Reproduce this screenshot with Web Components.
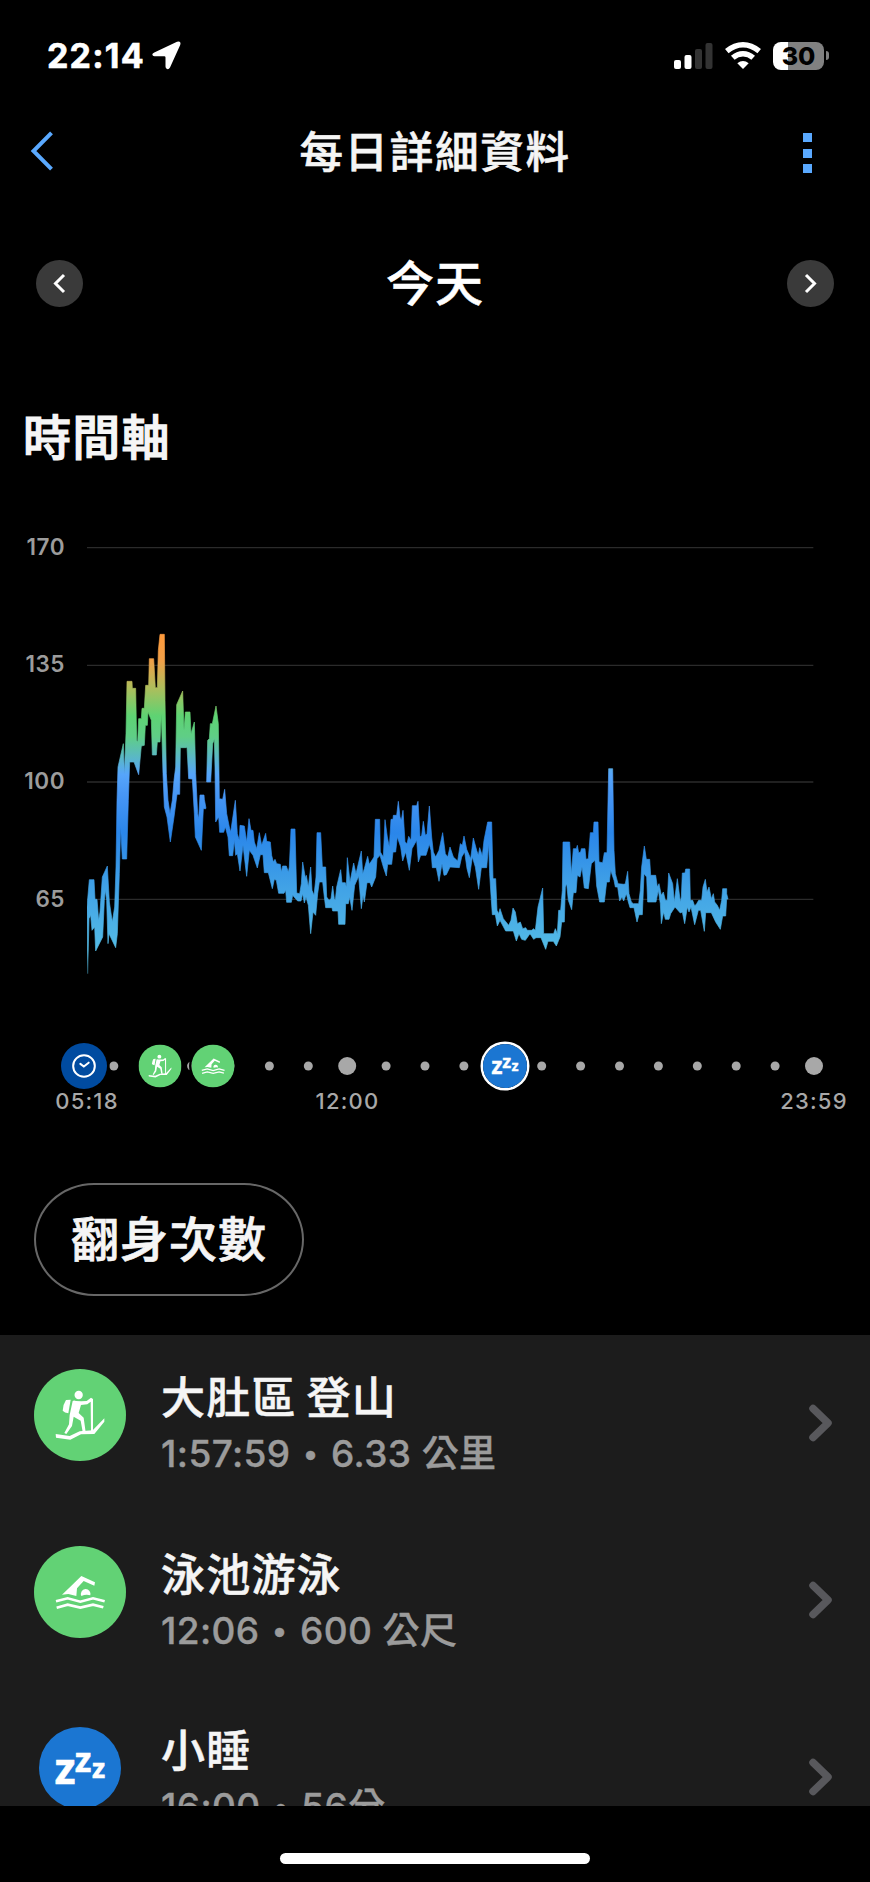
<!DOCTYPE html>
<html lang="zh-Hant">
<head>
<meta charset="utf-8">
<title>每日詳細資料</title>
<style>
  body {
    margin: 0;
    width: 870px;
    height: 1882px;
    overflow: hidden;
    background: #000;
    color: #f5f5f5;
    font-family: Inter, "Noto Sans CJK TC", sans-serif;
  }
</style>
</head>
<body>
<daily-page></daily-page>

<script>
const define = (name, html, setup) => {
  const $template = document.createElement("template");
  $template.innerHTML = html;
  window.customElements.define(name, class extends HTMLElement {
    constructor() {
      super();
      this.attachShadow({ mode: "open" });
      this.shadowRoot.appendChild($template.content.cloneNode(true));
    }
    connectedCallback() {
      if (setup) setup(this, this.shadowRoot);
    }
  });
};

// icons are drawn in a 276 x 276 box, the disc is added by activity-icon
const ICONS = {
  hike: {
    color: "#62d275",
    body: `
      <circle cx="134" cy="78" r="12.5"/>
      <path d="M96 93L110 92L103 133Q92 131 86 125Q87 106 96 93Z"/>
      <path d="M116 96Q120 93 126 96L142 97L158 96L171 86L177 90L177 193H171L170 98L160 106L141 108L134 132L149 146L155 190L146 188L140 155L119 143L114 171L97 195L91 192L105 166L107 138Z"/>
      <path d="M65 195L107 201L137 187L176 184L211 148V158L181 195L141 196L109 212L66 206Z"/>`
  },
  swim: {
    color: "#62d275",
    body: `
      <path d="M84 146L109 122L142 90L183 109L181 119L149 105L129 127L127 150L103 144Z"/>
      <path d="M142 150A14.500 14.500 0 1 1 169 148Q156 144 142 150Z"/>
      <path fill="none" stroke="#fff" stroke-width="8" d="M66 166L101 157L139 167L177 157L212 166M68 185L101 176L139 185L177 176L208 184"/>`
  },
  sleep: {
    color: "#1b76d2",
    body: `
      <g font-family="Noto Sans, sans-serif" font-weight="700" stroke="#fff" stroke-width="2">
        <text x="52" y="191" font-size="144">z</text>
        <text x="120" y="151" font-size="114">z</text>
        <text x="178" y="171" font-size="90">z</text>
      </g>`
  },
  clock: {
    color: "#004ba0",
    body: `
      <g fill="none" stroke="#fff" stroke-width="12" stroke-linecap="round">
        <circle cx="138" cy="138" r="65"/>
        <path d="M116 125L137 141L166 118"/>
      </g>`
  }
};

define("activity-icon", /*html*/ `
  <style>
    :host { display: block; border-radius: 50%; }
    svg { display: block; width: 100%; height: 100%; }
  </style>
  <svg viewBox="0 0 276 276" fill="#fff"></svg>
`, (host, root) => {
  const icon = ICONS[host.getAttribute("name")];
  root.querySelector("svg").innerHTML =
    `<circle cx="138" cy="138" r="138" fill="${icon.color}"/>${icon.body}`;
});

define("status-bar", /*html*/ `
  <style>
    :host {
      display: flex;
      align-items: center;
      box-sizing: border-box;
      height: 100px;
      padding: 11px 41px 0 47px;
      color: #fff;
    }
    .time { font-size: 34px; font-weight: 700; letter-spacing: 1.200px; margin-right: 7px; -webkit-text-stroke: .6px #fff; }
    .right { display: flex; align-items: center; margin-left: auto; }
    .wifi { margin: 0 12px; }
    .battery {
      display: flex;
      align-items: center;
      justify-content: center;
      width: 51px;
      height: 28px;
      border-radius: 8px;
      background: linear-gradient(90deg, #fff 29%, #818181 29%);
      color: #000;
      font-size: 25px;
      font-weight: 800;
    }
    .nub { width: 3px; height: 9px; margin-left: 2px; border-radius: 0 4px 4px 0; background: #818181; }
  </style>
  <span class="time">22:14</span>
  <svg width="29" height="29" viewBox="0 0 29 29"><path fill="#fff" d="M2.300 11.500L25 .8Q29.500-.6 28.200 4L18 26.500Q16.500 29 14.600 27.800Q13.500 27 13.500 25.500V16.500Q13.500 15.300 12.300 15.300H2.500Q.5 15.300 .3 13.500Q.3 12.300 2.300 11.500Z"/></svg>
  <div class="right">
    <svg width="39" height="26" viewBox="0 0 39 26">
      <rect y="17" width="7" height="9" rx="2" fill="#fff"/>
      <rect x="10.500" y="12" width="7" height="14" rx="2" fill="#fff"/>
      <rect x="21" y="6" width="7" height="20" rx="2" fill="#333"/>
      <rect x="31.500" width="7" height="26" rx="2" fill="#333"/>
    </svg>
    <svg class="wifi" width="36" height="27" viewBox="0 0 36 27">
      <g fill="none" stroke="#fff" stroke-width="5.500">
        <path d="M1.800 9.200Q9.500 2.800 18 2.800T34.200 9.200"/>
        <path d="M7.800 15.800Q12.500 11.700 18 11.700T28.200 15.800"/>
      </g>
      <path fill="#fff" d="M12.300 21.200Q18 16.800 23.700 21.200L18 26.900Z"/>
    </svg>
    <div class="battery">30</div>
    <div class="nub"></div>
  </div>
`);

define("nav-bar", /*html*/ `
  <style>
    :host {
      display: grid;
      grid-template-columns: 100px 1fr 100px;
      align-items: center;
      height: 103px;
    }
    h1 { margin: 2px 0 0; text-align: center; font-size: 43.5px; font-weight: 500; letter-spacing: 1.7px; line-height: 1; -webkit-text-stroke: .6px; }
    .back { margin: -2px 0 0 30px; }
    .menu { display: grid; gap: 6.500px; margin: 3px 0 0 33px; }
    .menu i { width: 9px; height: 9px; background: #5aa9ff; }
  </style>
  <svg class="back" width="24" height="40" viewBox="0 0 24 40"><path fill="none" stroke="#5aa9ff" stroke-width="4" d="M21.500 1.800L3.500 20L21.500 38.200"/></svg>
  <h1><slot></slot></h1>
  <div class="menu"><i></i><i></i><i></i></div>
`);

define("date-switcher", /*html*/ `
  <style>
    :host {
      display: flex;
      align-items: center;
      justify-content: space-between;
      height: 160px;
      padding: 0 36px;
      color: #fff;
    }
    h2 { margin: 2px 0 0; font-size: 48px; font-weight: 500; letter-spacing: 1px; line-height: 1; -webkit-text-stroke: .5px; }
    svg { display: block; }
  </style>
  <svg width="47" height="47" viewBox="0 0 47 47"><circle cx="23.500" cy="23.500" r="23.500" fill="#3a3a3a"/><path fill="none" stroke="#fff" stroke-width="3" d="M28 15L19.500 23.500L28 32"/></svg>
  <h2><slot></slot></h2>
  <svg width="47" height="47" viewBox="0 0 47 47"><circle cx="23.500" cy="23.500" r="23.500" fill="#3a3a3a"/><path fill="none" stroke="#fff" stroke-width="3" d="M19 15L27.500 23.500L19 32"/></svg>
`);

define("section-title", /*html*/ `
  <style>
    :host {
      display: flex;
      align-items: center;
      box-sizing: border-box;
      height: 125.600px;
      padding: 25px 0 0 23px;
      font-size: 48px;
      font-weight: 500;
      letter-spacing: 1.200px;
      line-height: 1;
      -webkit-text-stroke: 1.200px;
    }
  </style>
  <slot></slot>
`);

// heart rate bands: upper and lower edge of each part, relative to its own origin
const BANDS = [
  [{
    at: [0, 0],
    high: "51,920 58,838 72,838 75,897 81,897 86,960 90,935 97,830 112,797 118,905 127,965 134,920 138,800 141,600 144,500 160,430 163,520 168,400 171,243 186,243 187,264 197,264 200,420 203,425 206,355 214,355 216,324 223,324 227,255 236,255 238,175 251,175 256,262 262,262 265,150 270,102 283,102 285,300 289,520 294,600 300,640 307,600 312,540 317,500 320,313 338,272 342,390 346,335 360,335 363,400 373,365 377,520 383,640 386,655 390,584 402,584 403,597 408,624",
    low: "53,1120 57,955 62,945 66,990 74,980 77,1052 98,1010 103,900 106,870 110,900 114,1030 117,1000 137,1042 142,1000 148,820 152,680 157,776 170,776 175,600 179,485 192,485 206,523 214,437 223,435 226,375 232,375 234,335 244,360 247,464 259,464 262,425 270,425 274,340 279,520 283,620 291,650 301,725 312,650 321,582 329,582 331,442 348,442 351,440 356,535 367,536 373,640 376,710 394,750 400,625 407,625"
  }],
  [{
    at: [0, 0],
    high: "410,545 413,420 418,415 421,370 427,370 438,317 445,370 448,595 458,597 464,567 470,640 478,680 482,695 496,600 502,700 508,720 510,675 523,677 530,725 537,655 543,690 549,690 553,725 560,745 568,697 575,735 587,699 590,723 601,725 605,765 610,785 615,777 620,790 631,792 634,815 638,797 649,797 655,815 658,800 663,686 675,686 680,878 689,880 694,850 698,785 706,832 709,825 715,860 722,800 726,870 732,885 738,830 741,697 752,697 757,800 767,800 770,890",
    low: "422,545 428,430 433,417 435,500 437,665 446,650 449,696 461,696 466,680 474,710 478,766 488,766 493,720 497,765 502,760 510,812 519,735 530,828 538,750 549,765 562,803 571,763 579,763 583,817 595,817 607,865 613,837 619,840 626,879 642,879 647,870 650,906 664,906 668,885 683,902 693,902 698,880 703,908 708,890 715,915 722,1000 729,935 737,945 743,880 748,845 758,845 763,890 767,922"
  }, {
    at: [750, 420],
    high: "27,480 33,475 38,437 43,475 46,480 50,440 62,388 66,427 76,427 79,440 82,352 90,425 101,368 108,400 124,332 128,400 133,385 143,348 148,372 162,350 166,237 179,237 181,335 190,350 195,238 202,290 208,320 213,237 219,237 220,225 230,225 235,183 240,230 244,240 249,210 255,305 261,310 266,288 273,300 277,196 290,196 294,183 300,290 305,285 310,243 316,285 321,280 328,197 335,290 340,335 347,350 357,330 368,277 376,340 383,350 390,320 400,350 413,362 421,310 427,315 432,287 440,327 452,355 460,293 470,330 475,345 479,322 487,346 492,300 503,245 515,245 519,415 527,415 531,510 536,520 540,505 550,535 558,545 566,555 573,540 579,503 586,515 592,550 601,545 608,565 617,562 622,570 636,570 640,565 646,570 654,500 668,443 671,580 701,580 706,565 712,580 716,510 722,510 727,450",
    low: "17,502 36,502 38,512 54,512 56,552 75,552 77,490 85,490 89,470 96,510 104,435 116,408 124,505 129,465 133,485 141,427 150,427 155,440 167,410 171,355 180,345 190,380 199,407 203,372 215,372 219,335 227,335 232,290 242,320 248,362 257,335 268,390 276,325 290,300 295,365 302,345 318,345 328,312 333,330 337,382 349,382 357,423 366,370 372,405 379,403 390,380 418,382 425,350 434,335 441,385 448,412 457,350 466,380 476,447 484,382 500,382 506,310 509,400 513,465 517,523 526,523 532,557 540,540 557,572 580,572 589,602 597,580 605,597 616,600 630,580 641,597 648,592 663,592 677,627 684,603 700,603 709,617 720,590 725,545"
  }, {
    at: [1440, 420],
    high: "39,305 59,305 64,400 70,325 79,325 82,315 86,337 92,335 94,325 105,325 108,357 115,355 121,277 130,277 132,245 144,245 147,365 158,367 163,337 171,337 176,85 188,85 192,330 196,400 204,430 222,432 226,430 233,393 237,460 244,485 250,490 266,490 271,450 275,380 283,317 289,357 299,357 302,405 317,405 322,440 327,430 334,465 340,455 346,480 352,480 356,398 368,430 373,485 382,415 391,485 394,470 397,398 405,398 407,386 419,386 421,480 428,480 434,497 440,490 446,480 455,480 459,440 466,417 471,455 477,440 484,475 490,460 494,485 502,495 509,510 515,480 518,445 530,445 530,460 534,476",
    low: "43,545 46,440 50,430 55,480 65,508 70,457 78,457 82,405 90,410 96,380 103,443 115,445 124,370 135,360 140,437 149,485 163,485 170,425 178,425 182,390 192,420 196,440 203,440 209,482 216,470 221,482 229,460 235,485 240,502 252,502 261,545 267,523 277,523 282,400 290,410 293,485 318,485 325,450 331,490 334,550 341,515 346,537 357,537 362,520 375,500 391,518 397,515 404,550 412,500 417,515 423,500 434,553 445,510 452,510 463,573 467,517 484,517 497,545 511,567 518,527 527,527 530,476"
  }]
];

define("heart-rate-chart", /*html*/ `
  <style>
    :host {
      display: grid;
      grid-template-columns: 65px 727px;
      column-gap: 22px;
      height: 500px;
    }
    .labels {
      display: grid;
      grid-auto-rows: 117.200px;
      align-items: center;
      align-content: start;
      justify-items: end;
      color: #9c9c9c;
      font-size: 22.500px;
      font-weight: 600;
      letter-spacing: 0.5px;
      line-height: 1;
    }
    svg { display: block; width: 727px; height: 500px; }
  </style>
  <div class="labels"><span>170</span><span>135</span><span>100</span><span>65</span></div>
  <svg viewBox="51 -334 2181 1500">
    <defs>
      <linearGradient id="zones" gradientUnits="userSpaceOnUse" x1="0" y1="100" x2="0" y2="1130">
        <stop offset="0" stop-color="#ff9a3c"/>
        <stop offset=".08" stop-color="#f0a048"/>
        <stop offset=".16" stop-color="#acbe5c"/>
        <stop offset=".24" stop-color="#5ed373"/>
        <stop offset=".3" stop-color="#5fce86"/>
        <stop offset=".41" stop-color="#56a5fb"/>
        <stop offset=".47" stop-color="#4796f5"/>
        <stop offset=".58" stop-color="#2a86ea"/>
        <stop offset=".74" stop-color="#41a2e6"/>
        <stop offset=".92" stop-color="#54bce6"/>
        <stop offset="1" stop-color="#24505f"/>
      </linearGradient>
    </defs>
    <g stroke="#2b2b2b" stroke-width="4">
      <path d="M51 -158H2230M51 195H2230M51 545H2230M51 897H2230"/>
    </g>
    <g class="bands" fill="url(#zones)" stroke="url(#zones)" stroke-width="2"></g>
  </svg>
`, (host, root) => {
  const edge = (parts, key) => parts.flatMap(({ at, [key]: list }) =>
    list.split(" ").map(p => {
      const [x, y] = p.split(",").map(Number);
      return [x + at[0], y + at[1]];
    }));
  root.querySelector(".bands").innerHTML = BANDS.map(parts =>
    `<polygon points="${edge(parts, "high").concat(edge(parts, "low").reverse()).join(" ")}"/>`
  ).join("");
});

define("day-timeline", /*html*/ `
  <style>
    :host { display: block; padding-top: 53px; }
    .track { position: relative; height: 48px; }
    svg { display: block; }
    activity-icon {
      position: absolute;
      top: 50%;
      transform: translate(-50%, -50%);
      width: 43px;
      height: 43px;
      box-shadow: 0 0 0 2.500px #000;
    }
    .start { left: 83.500px; width: 46px; height: 46px; }
    .hike { left: 159.500px; }
    .swim { left: 213px; }
    .nap { left: 505.300px; width: 44px; height: 44px; box-shadow: 0 0 0 2.500px #fff; }
    .times {
      display: grid;
      grid-template-columns: 174px 347px 1fr 112px;
      text-align: center;
      color: #a8a8a8;
      font-size: 22px;
      font-weight: 500;
      letter-spacing: 1.200px;
      line-height: 23px;
    }
    .times :last-child { grid-column: 4; }
  </style>
  <div class="track">
    <svg width="870" height="48" fill="#a8a8a8"></svg>
    <activity-icon class="start" name="clock"></activity-icon>
    <activity-icon class="hike" name="hike"></activity-icon>
    <activity-icon class="swim" name="swim"></activity-icon>
    <activity-icon class="nap" name="sleep"></activity-icon>
  </div>
  <div class="times"><span>05:18</span><span>12:00</span><span>23:59</span></div>
`, (host, root) => {
  // one dot per hour, noon and midnight are bigger
  let dots = "";
  for (let hour = 6; hour <= 24; hour++) {
    if (hour === 7 || hour === 16) continue;
    const r = hour % 12 === 0 ? 9 : 4.5;
    dots += `<circle cx="${347.2 + (hour - 12) * 38.9}" cy="24" r="${r}"/>`;
  }
  root.querySelector("svg").innerHTML = dots;
});

define("pill-button", /*html*/ `
  <style>
    :host { display: block; padding: 70.400px 0 39px 34px; }
    button {
      display: block;
      box-sizing: border-box;
      width: 270px;
      height: 113px;
      padding: 2px 0 0;
      border: 2px solid #676767;
      border-radius: 60px / 56.500px;
      background: none;
      color: inherit;
      font: 500 48px/1 Inter, "Noto Sans CJK TC", sans-serif;
      letter-spacing: 1px;
      -webkit-text-stroke: .7px;
    }
  </style>
  <button><slot></slot></button>
`);

define("activity-row", /*html*/ `
  <style>
    :host {
      display: grid;
      grid-template-columns: 92px 1fr 25px;
      column-gap: 35px;
      box-sizing: border-box;
      height: 176.700px;
      padding: 0 37px 0 34px;
    }
    .icon activity-icon { width: 92px; height: 92px; margin-top: 34px; }
    :host([icon="sleep"]) .icon activity-icon { width: 82px; height: 82px; margin: 39px 0 0 5px; }
    .title { margin-top: 41px; font-size: 44px; font-weight: 500; letter-spacing: 1.200px; word-spacing: -3px; line-height: 44px; -webkit-text-stroke: .5px; }
    .detail { margin-top: 14px; color: #9b9b9b; font-size: 37px; font-weight: 500; letter-spacing: .4px; line-height: 40px; -webkit-text-stroke: .4px; }
    ::slotted(i) { margin: 0 4px; font: 33px/1 "Liberation Sans", sans-serif; }
    svg { align-self: center; }
  </style>
  <div class="icon"></div>
  <div>
    <div class="title"><slot name="title"></slot></div>
    <div class="detail"><slot></slot></div>
  </div>
  <svg width="25" height="38" viewBox="0 0 25 38"><path fill="none" stroke="#58585c" stroke-width="7.500" stroke-linecap="round" stroke-linejoin="round" d="M5 4.500L20 19L5 33.500"/></svg>
`, (host, root) => {
  root.querySelector(".icon").innerHTML =
    `<activity-icon name="${host.getAttribute("icon")}"></activity-icon>`;
});

define("activity-list", /*html*/ `
  <style>
    :host { display: block; height: 471px; overflow: hidden; background: #1c1c1c; }
  </style>
  <slot></slot>
`);

define("home-indicator", /*html*/ `
  <style>
    :host { display: flex; justify-content: center; padding-top: 47px; }
    div { width: 310px; height: 11px; border-radius: 6px; background: #fff; }
  </style>
  <div></div>
`);

define("daily-page", /*html*/ `
  <style>
    :host { display: flex; flex-direction: column; height: 1882px; }
    :host > * { flex: none; }
  </style>
  <status-bar></status-bar>
  <nav-bar>每日詳細資料</nav-bar>
  <date-switcher>今天</date-switcher>
  <section-title>時間軸</section-title>
  <heart-rate-chart></heart-rate-chart>
  <day-timeline></day-timeline>
  <pill-button>翻身次數</pill-button>
  <activity-list>
    <activity-row icon="hike"><span slot="title">大肚區 登山</span>1:57:59 <i>•</i> 6.33 公里</activity-row>
    <activity-row icon="swim"><span slot="title">泳池游泳</span>12:06 <i>•</i> 600 公尺</activity-row>
    <activity-row icon="sleep"><span slot="title">小睡</span>16:00 <i>•</i> 56分</activity-row>
  </activity-list>
  <home-indicator></home-indicator>
`);
</script>
</body>
</html>
